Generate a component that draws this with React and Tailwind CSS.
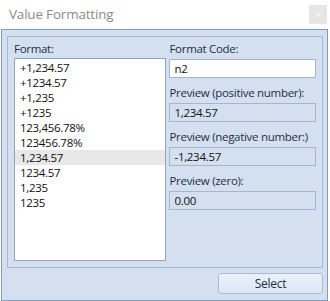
import React from 'react';

const formats = [
  '+1,234.57',
  '+1234.57',
  '+1,235',
  '+1235',
  '123,456.78%',
  '123456.78%',
  '1,234.57',
  '1234.57',
  '1,235',
  '1235',
];

const selected = '1,234.57';

function Field({ label, value, editable }) {
  return (
    <div className="flex flex-col">
      <div className="h-[16px] leading-[16px] mb-[2px] text-[#1e2f45] whitespace-nowrap">{label}</div>
      <div
        className={
          'h-[19px] leading-[17px] px-[4px] border text-[#111] ' +
          (editable ? 'bg-white border-[#a4b6cf]' : 'bg-[#d4e0f0] border-[#a4b6cf]')
        }
      >
        {value}
      </div>
    </div>
  );
}

export default function App() {
  return (
    <div
      className="w-[330px] h-[301px] bg-white flex flex-col text-[11.5px] tracking-[-0.3px]"
      style={{ fontFamily: '"Segoe UI", "Open Sans", "Noto Sans", sans-serif' }}
    >
      {/* Title bar */}
      <div className="h-[29px] flex items-center justify-between pl-[9px] pr-[3px]">
        <span className="text-[13.5px] text-[#8c8c8c] tracking-[-0.2px]">Value Formatting</span>
        <div className="w-[18px] h-[19px] bg-[#e6e6e6] flex items-center justify-center text-[#f7f7f7] text-[12px] leading-none">
          ×
        </div>
      </div>

      {/* Body */}
      <div className="ml-[1px] w-[327px] flex-1 border border-[#7f9dc3] bg-[#d4e0f0] pt-[6px] pl-[5px] pr-[4px] flex flex-col">
        <div className="w-[316px] h-[232px] border border-[#a6b9d4] pt-[4px] px-[6px] pb-[6px] flex gap-[3px]">
          {/* Format list */}
          <div className="w-[153px] flex flex-col">
            <div className="h-[16px] leading-[16px] mb-[1px] text-[#1e2f45]">Format:</div>
            <div className="flex-1 bg-white border border-[#8ea4c2] py-[1px]">
              {formats.map((f, i) => (
                <div
                  key={`fmt-${i}`}
                  className={
                    'h-[15px] leading-[15px] pl-[5px] text-[#111] ' +
                    (f === selected && i === 6 ? 'bg-[#e8e8e8]' : '')
                  }
                >
                  {f}
                </div>
              ))}
            </div>
          </div>

          {/* Right column */}
          <div className="w-[147px] flex flex-col gap-[7px]">
            <Field label="Format Code:" value="n2" editable />
            <Field label="Preview (positive number):" value="1,234.57" />
            <Field label="Preview (negative number:)" value="-1,234.57" />
            <Field label="Preview (zero):" value="0.00" />
          </div>
        </div>

        <div className="flex justify-end mt-[5px]">
          <button className="w-[105px] h-[21px] rounded-[3px] border border-[#a9bbd4] bg-gradient-to-b from-[#eaf1fb] to-[#dce7f5] text-[#1e2f45] text-[12px] leading-[19px]">
            Select
          </button>
        </div>
      </div>
    </div>
  );
}
